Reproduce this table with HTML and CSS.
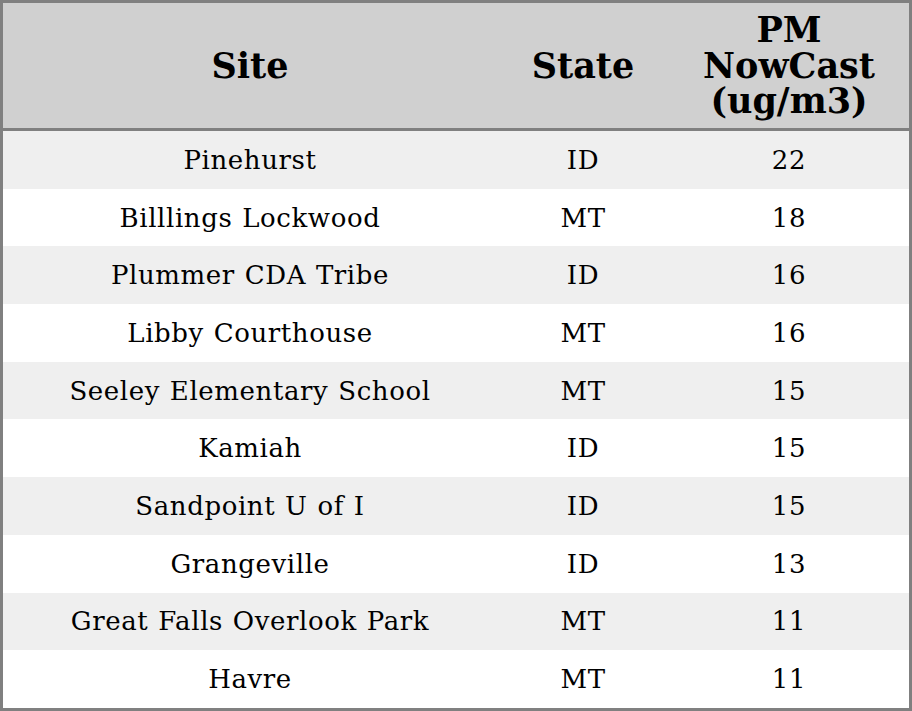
FILE: index.html
```html
<!DOCTYPE html>
<html>
<head>
<meta charset="utf-8">
<link rel="stylesheet" href="styles.css">
</head>
<body>
<table class="pm-table">
  <colgroup>
    <col class="col-site">
    <col class="col-state">
    <col class="col-pm">
  </colgroup>
  <thead>
    <tr><th>Site</th><th>State</th><th>PM<br>NowCast<br>(ug/m3)</th></tr>
  </thead>
  <tbody>
    <tr><td>Pinehurst</td><td>ID</td><td>22</td></tr>
    <tr><td>Billlings Lockwood</td><td>MT</td><td>18</td></tr>
    <tr><td>Plummer CDA Tribe</td><td>ID</td><td>16</td></tr>
    <tr><td>Libby Courthouse</td><td>MT</td><td>16</td></tr>
    <tr><td>Seeley Elementary School</td><td>MT</td><td>15</td></tr>
    <tr><td>Kamiah</td><td>ID</td><td>15</td></tr>
    <tr><td>Sandpoint U of I</td><td>ID</td><td>15</td></tr>
    <tr><td>Grangeville</td><td>ID</td><td>13</td></tr>
    <tr><td>Great Falls Overlook Park</td><td>MT</td><td>11</td></tr>
    <tr><td>Havre</td><td>MT</td><td>11</td></tr>
  </tbody>
</table>
</body>
</html>
```

FILE: styles.css
```css
html, body {
  margin: 0;
  padding: 0;
  background: #ffffff;
}
.pm-table {
  width: 912px;
  height: 711px;
  box-sizing: border-box;
  table-layout: fixed;
  border-collapse: separate;
  border-spacing: 0;
  border: 3px solid #808080;
  font-family: "DejaVu Serif", serif;
  color: #000000;
}
.col-site { width: 494px; }
.col-state { width: 172px; }
.col-pm { width: 240px; }
.pm-table th {
  background: #d0d0d0;
  font-weight: bold;
  font-size: 35px;
  line-height: 35.5px;
  height: 125px;
  padding: 0;
  text-align: center;
  vertical-align: middle;
  border-bottom: 3px solid #808080;
}
.pm-table td {
  font-size: 26px;
  letter-spacing: 0.6px;
  word-spacing: 1px;
  height: 57.7px;
  padding: 0;
  text-align: center;
  vertical-align: middle;
}
.pm-table tbody tr:nth-child(odd) td {
  background: #efefef;
}
```
